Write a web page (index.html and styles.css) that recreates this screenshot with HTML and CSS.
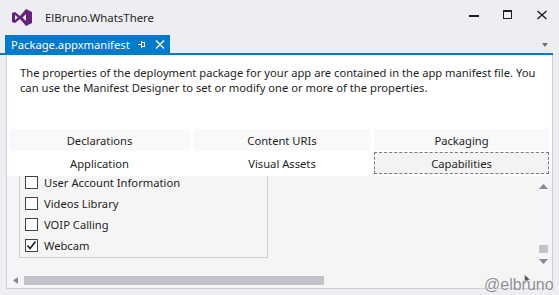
FILE: index.html
```html
<!DOCTYPE html>
<html>
<head>
	<title>ElBruno.WhatsThere</title>
	<link rel="stylesheet" href="styles.css">
</head>
<body>
	<div id="title_bar">
		<svg id="vs_logo" width="20" height="17" viewBox="0 0 20 17">
			<path fill="#68217a" fill-rule="evenodd" d="M0 4 L3 3 L8 7 L14 0 L20 3 L20 14 L14 17 L8 10 L3 14 L0 13 Z M3 6 L3 11 L6 8.5 Z M14 5 L14 12 L10.5 8.5 Z"/>
		</svg>
		<span id="title_text">ElBruno.WhatsThere</span>
		<div id="window_buttons">
			<div class="win_button"><svg width="10" height="10" viewBox="0 0 10 10"><rect x="0" y="5" width="10" height="2" fill="#1e1e1e"/></svg></div>
			<div class="win_button"><svg width="10" height="10" viewBox="0 0 10 10"><rect x="0.5" y="0.5" width="8" height="8" fill="none" stroke="#1e1e1e"/><rect x="0" y="0" width="9" height="2" fill="#1e1e1e"/></svg></div>
			<div class="win_button"><svg width="10" height="10" viewBox="0 0 10 10"><path d="M0.5 1 L9.5 9 M9.5 1 L0.5 9" stroke="#1e1e1e" stroke-width="1.4"/></svg></div>
		</div>
	</div>

	<div id="doc_tabs">
		<div id="doc_tab">
			<span id="doc_tab_name">Package.appxmanifest</span>
			<svg id="pin_icon" width="8" height="7" viewBox="0 0 8 7"><path d="M0 3.5 H3 M3.5 0 V7" stroke="#fff"/><rect x="3.5" y="1.5" width="3" height="4" fill="none" stroke="#fff"/></svg>
			<svg id="tab_close" width="10" height="9" viewBox="0 0 10 9"><path d="M1 0.5 L9 8.5 M9 0.5 L1 8.5" stroke="#fff" stroke-width="1.4"/></svg>
		</div>
		<svg id="tab_menu" width="6" height="4" viewBox="0 0 6 4"><path d="M0 0 H6 L3 4 Z" fill="#717171"/></svg>
	</div>
	<div id="doc_line"></div>

	<div id="manifest_panel">
		<div id="intro">The properties of the deployment package for your app are contained in the app manifest file. You<br>can use the Manifest Designer to set or modify one or more of the properties.</div>

		<div id="designer_tabs">
			<div class="designer_tab top_row">Declarations</div>
			<div class="designer_tab top_row">Content URIs</div>
			<div class="designer_tab top_row">Packaging</div>
			<div class="designer_tab">Application</div>
			<div class="designer_tab">Visual Assets</div>
			<div class="designer_tab selected">Capabilities</div>
		</div>

		<div id="tab_page">
			<div id="page_view">
				<div id="caps_group">
					<div class="cap_row"><span class="check_box"></span>User Account Information</div>
					<div class="cap_row"><span class="check_box"></span>Videos Library</div>
					<div class="cap_row"><span class="check_box"></span>VOIP Calling</div>
					<div class="cap_row"><span class="check_box"><svg width="11" height="11" viewBox="0 0 11 11"><path d="M1.5 5.5 L4 8.5 L9.5 1.5" fill="none" stroke="#1e1e1e" stroke-width="1.6"/></svg></span>Webcam</div>
				</div>
			</div>
			<div id="v_scroll">
				<svg width="9" height="5" viewBox="0 0 9 5"><path d="M0 5 L4.5 0 L9 5 Z" fill="#868999"/></svg>
				<div id="v_thumb"></div>
				<svg width="9" height="5" viewBox="0 0 9 5"><path d="M0 0 H9 L4.5 5 Z" fill="#868999"/></svg>
			</div>
			<div id="h_scroll">
				<svg width="5" height="7" viewBox="0 0 5 7"><path d="M5 0 V7 L0 3.5 Z" fill="#868999"/></svg>
				<div id="h_thumb"></div>
			</div>
			<div id="scroll_corner"></div>
		</div>
	</div>

	<svg id="mouse_cursor" width="7" height="10" viewBox="0 0 7 10"><path d="M0.5 0.5 V8 L2.5 6.5 L4 9.5 L5 9 L3.8 6 L6.5 6 Z" fill="#555" stroke="#eee" stroke-width="0.6"/></svg>
	<div id="watermark">@elbruno</div>
</body>
</html>
```

FILE: styles.css
```css
body
{
	margin: 0;
	width: 559px;
	height: 295px;
	overflow: hidden;
	position: relative;
	background: #eeeef2;
	color: #1e1e1e;
	font-family: "Noto Sans", "Open Sans", sans-serif;
	font-size: 11.2px;
}
/*=============================*/
#title_bar
{
	height: 35px;
	display: flex;
	align-items: center;
}
#vs_logo
{
	margin-left: 12px;
}
#title_text
{
	margin-left: 13px;
	font-size: 11.4px;
}
#window_buttons
{
	margin-left: auto;
	align-self: flex-start;
	display: flex;
}
.win_button
{
	width: 34px;
	height: 29px;
	display: flex;
	justify-content: center;
	align-items: center;
}
/*=============================*/
#doc_tabs
{
	height: 18px;
	padding-left: 5px;
	display: flex;
	align-items: center;
}
#doc_tab
{
	width: 165px;
	height: 18px;
	box-sizing: border-box;
	padding-left: 6px;
	background: #007acc;
	color: #fff;
	display: flex;
	align-items: center;
}
#pin_icon
{
	margin-left: auto;
}
#tab_close
{
	margin-left: 9px;
	margin-right: 5px;
}
#tab_menu
{
	margin-left: auto;
	margin-right: 11px;
	margin-top: 2px;
}
#doc_line
{
	height: 2px;
	margin-right: 6px;
	background: #007acc;
}
/*=============================*/
#manifest_panel
{
	margin: 0 6px;
	height: 233px;
	background: #fff;
	border: 1px solid #cccedb;
	border-top: none;
	display: flex;
	flex-direction: column;
}
#intro
{
	height: 74px;
	box-sizing: border-box;
	padding: 10px 0 0 13px;
	line-height: 15px;
	white-space: nowrap;
}
/*=============================*/
#designer_tabs
{
	display: grid;
	grid-template-columns: 181px 178px 175px;
	grid-template-rows: 22px 22px;
	column-gap: 3px;
	row-gap: 1px;
	padding: 0 0 2px 2px;
}
.designer_tab
{
	display: flex;
	justify-content: center;
	align-items: center;
	padding-top: 1px;
	box-sizing: border-box;
}
.top_row
{
	background: #f9f9f9;
}
.selected
{
	background: #f3f3f3;
	border: 1px dashed #7a7a7a;
	padding-top: 0;
}
/*=============================*/
#tab_page
{
	flex: 1;
	background: #f5f5f5;
	display: grid;
	grid-template-columns: 1fr 17px;
	grid-template-rows: 1fr 16px;
	min-height: 0;
}
#page_view
{
	overflow: hidden;
	padding-left: 12px;
}
#caps_group
{
	width: 249px;
	box-sizing: border-box;
	margin-top: -4px;
	padding: 0 0 1px 5px;
	border: 1px solid #cccedb;
	border-top: none;
}
.cap_row
{
	height: 21px;
	display: flex;
	align-items: center;
}
.check_box
{
	width: 13px;
	height: 13px;
	box-sizing: border-box;
	margin-right: 6px;
	border: 1px solid #444;
	background: #fcfcfc;
	display: flex;
	justify-content: center;
	align-items: center;
}
#v_scroll
{
	display: flex;
	flex-direction: column;
	align-items: center;
	padding-top: 8px;
}
#v_thumb
{
	width: 9px;
	height: 8px;
	margin-top: 56px;
	margin-bottom: 6px;
	background: #c2c3c9;
}
#h_scroll
{
	display: flex;
	align-items: center;
	padding-left: 6px;
}
#h_thumb
{
	width: 300px;
	height: 9px;
	margin-left: 6px;
	background: #c2c3c9;
}
#scroll_corner
{
	background: #f5f5f5;
}
/*=============================*/
#mouse_cursor
{
	position: absolute;
	left: 524px;
	top: 274px;
}
#watermark
{
	position: absolute;
	left: 484px;
	top: 276px;
	font-family: "Liberation Sans", sans-serif;
	font-size: 16px;
	color: #8d8d96;
	text-shadow: 0 0 1px #fff, 0 0 1px #fff;
}
```
